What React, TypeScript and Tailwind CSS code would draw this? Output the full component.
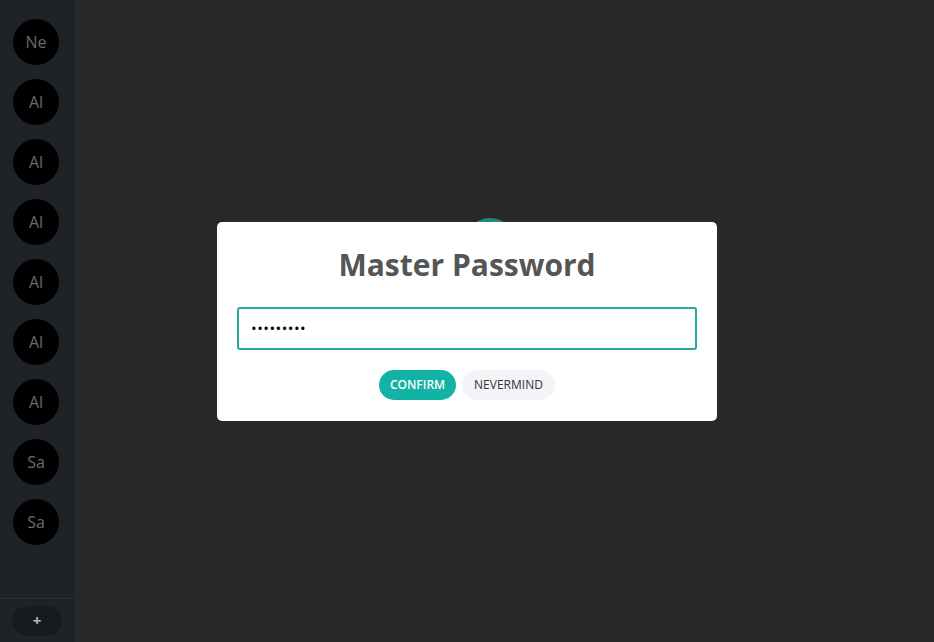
import React from "react";

const items = ["Ne", "Al", "Al", "Al", "Al", "Al", "Al", "Sa", "Sa"];

export default function App() {
  return (
    <div
      className="relative flex h-[642px] w-[934px] overflow-hidden bg-[#282828]"
      style={{ fontFamily: '"Open Sans", "Noto Sans", sans-serif' }}
    >
      <aside className="flex h-full w-[75px] flex-col bg-[#1f2327]">
        <div className="flex flex-1 flex-col items-center gap-[14px] pr-[3px] pt-[19px]">
          {items.map((t, i) => (
            <div
              key={i}
              className="flex h-[46px] w-[46px] items-center justify-center rounded-full bg-black text-[16px] text-[#6b6b6b]"
            >
              {t}
            </div>
          ))}
        </div>
        <div className="flex h-[44px] items-center justify-center border-t border-[#2a2e33] pr-[1px]">
          <button className="flex h-[30px] w-[50px] items-center justify-center rounded-full bg-[#181b1e] text-[15px] font-bold text-[#bbbbbb]">
            +
          </button>
        </div>
      </aside>
      <main className="relative flex-1">
        <div className="absolute left-[387px] top-[218px] h-[56px] w-[56px] rounded-full bg-[#1e8a80]" />
      </main>
      <div className="absolute inset-0 flex items-start justify-center pt-[222px]">
        <div className="flex h-[199px] w-[500px] flex-col items-center rounded-[5px] bg-white px-[20px] pt-[24px]">
          <h1 className="text-[30px] font-bold leading-[38px] text-[#555555]">Master Password</h1>
          <div className="mt-[23px] flex h-[43px] w-[460px] items-center rounded-[3px] border-2 border-[#2aa89b] px-[12px]">
            <span className="text-[15px] tracking-[0.5px] text-black">•••••••••</span>
          </div>
          <div className="mt-[20px] flex gap-[6px]">
            <button className="h-[30px] w-[77px] rounded-full bg-[#12b2a4] text-[12px] font-semibold text-white">
              CONFIRM
            </button>
            <button className="h-[30px] w-[93px] rounded-full bg-[#f3f4f7] text-[12px] text-[#333333]">
              NEVERMIND
            </button>
          </div>
        </div>
      </div>
    </div>
  );
}
